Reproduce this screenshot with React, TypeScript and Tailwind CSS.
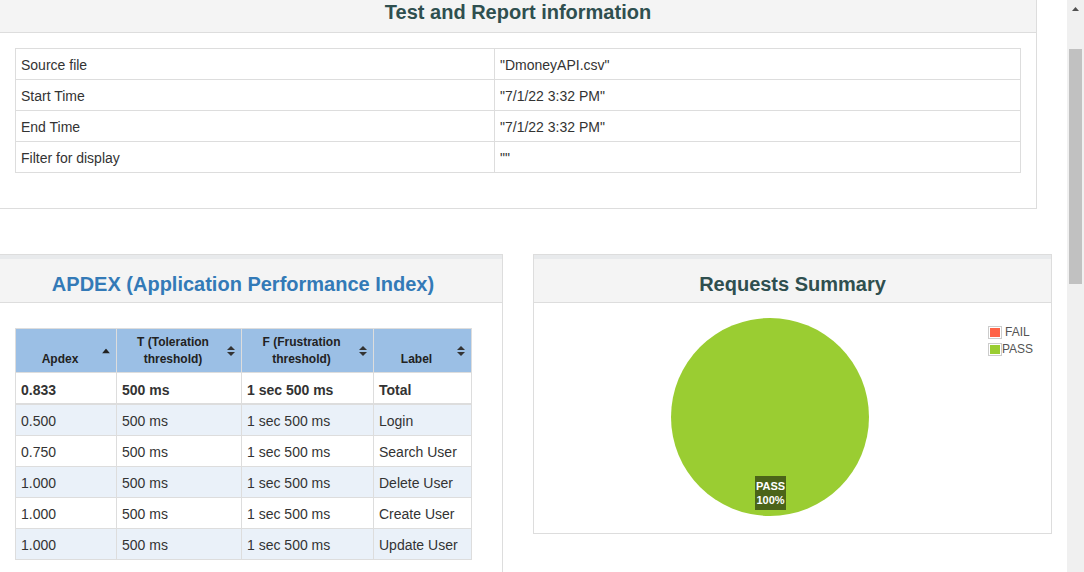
import React from "react";

const font = { fontFamily: '"Liberation Sans", Arial, sans-serif' };

function SortBoth() {
  return (
    <svg width="8" height="10" viewBox="0 0 8 10" className="block">
      <path d="M0 4 L4 0 L8 4 Z" fill="#333" />
      <path d="M0 6 L4 10 L8 6 Z" fill="#333" />
    </svg>
  );
}

function SortUp() {
  return (
    <svg width="8" height="5" viewBox="0 0 8 5" className="block">
      <path d="M0 5 L4 0 L8 5 Z" fill="#222" />
    </svg>
  );
}

const infoRows: [string, string][] = [
  ["Source file", '"DmoneyAPI.csv"'],
  ["Start Time", '"7/1/22 3:32 PM"'],
  ["End Time", '"7/1/22 3:32 PM"'],
  ["Filter for display", '""'],
];

const apdexRows: [string, string, string, string][] = [
  ["0.500", "500 ms", "1 sec 500 ms", "Login"],
  ["0.750", "500 ms", "1 sec 500 ms", "Search User"],
  ["1.000", "500 ms", "1 sec 500 ms", "Delete User"],
  ["1.000", "500 ms", "1 sec 500 ms", "Create User"],
  ["1.000", "500 ms", "1 sec 500 ms", "Update User"],
];

const headers: { t: React.ReactNode; w: string; up: boolean }[] = [
  { t: "Apdex", w: "w-[101px]", up: true },
  {
    t: (
      <>
        T (Toleration
        <br />
        threshold)
      </>
    ),
    w: "w-[125px]",
    up: false,
  },
  {
    t: (
      <>
        F (Frustration
        <br />
        threshold)
      </>
    ),
    w: "w-[132px]",
    up: false,
  },
  { t: "Label", w: "w-[98px]", up: false },
];

export default function App() {
  return (
    <div
      className="flex h-[572px] w-[1084px] overflow-hidden bg-white text-[#333]"
      style={font}
    >
      <div className="flex-1 min-w-0 flex flex-col">
        <div className="h-px bg-[#3f7f3f]" />

        {/* Test and Report information */}
        <div className="w-[1037px] border-r border-b border-[#dddddd] bg-white">
          <div className="h-[33px] pb-[8px] bg-[#f4f4f4] border-b border-[#dddddd] flex items-center justify-center">
            <h2 className="text-[20px] font-bold text-[#2f4f4f] leading-none">
              Test and Report information
            </h2>
          </div>
          <div className="pt-[15px] pb-[35px] pl-[15px] pr-[15px]">
            <table className="w-[1006px] border-collapse text-[14px]">
              <tbody>
                {infoRows.map(([k, v]) => (
                  <tr key={k}>
                    <td className="w-[479px] border border-[#dddddd] pl-[5px] pt-[6px] pb-[4px] leading-[20px]">
                      {k}
                    </td>
                    <td className="border border-[#dddddd] pl-[5px] pt-[6px] pb-[4px] leading-[20px]">
                      {v}
                    </td>
                  </tr>
                ))}
              </tbody>
            </table>
          </div>
        </div>

        <div className="mt-[45px] flex items-start">
          {/* APDEX */}
          <div className="w-[503px] h-[400px] border-t border-r border-[#dddddd]">
            <div className="h-[4px] bg-[#e8eaec]" />
            <div className="h-[44px] pt-[6px] pr-[16px] bg-[#f4f4f4] border-b border-[#dddddd] flex items-center justify-center">
              <h2 className="text-[20px] font-bold text-[#337ab7] leading-none">
                APDEX (Application Performance Index)
              </h2>
            </div>
            <div className="pt-[25px] pl-[15px]">
              <table className="w-[457px] border-collapse text-[14px]">
                <thead>
                  <tr className="bg-[#9bbfe5] text-[12px] font-bold text-[#222]">
                    {headers.map((h, i) => (
                      <th
                        key={i}
                        className={`${h.w} relative border border-[#dddddd] pt-[5px] pb-[4px] pl-[6px] pr-[18px] leading-[17px] align-bottom text-center font-bold`}
                      >
                        {h.t}
                        <span className="absolute right-[6px] top-1/2 -translate-y-1/2">
                          {h.up ? <SortUp /> : <SortBoth />}
                        </span>
                      </th>
                    ))}
                  </tr>
                  <tr className="bg-white font-bold">
                    {["0.833", "500 ms", "1 sec 500 ms", "Total"].map((c) => (
                      <td
                        key={c}
                        className="border border-b-2 border-[#dddddd] pl-[5px] pt-[7px] pb-[3px] leading-[20px]"
                      >
                        {c}
                      </td>
                    ))}
                  </tr>
                </thead>
                <tbody>
                  {apdexRows.map((r, i) => (
                    <tr
                      key={i}
                      className={i % 2 === 0 ? "bg-[#eaf1f9]" : "bg-white"}
                    >
                      {r.map((c, j) => (
                        <td
                          key={j}
                          className="border border-[#dddddd] pl-[5px] pt-[6px] pb-[4px] leading-[20px]"
                        >
                          {c}
                        </td>
                      ))}
                    </tr>
                  ))}
                </tbody>
              </table>
            </div>
          </div>

          {/* Requests Summary */}
          <div className="ml-[30px] w-[519px] border border-[#dddddd]">
            <div className="h-[4px] bg-[#e8eaec]" />
            <div className="h-[44px] pt-[6px] bg-[#f4f4f4] border-b border-[#dddddd] flex items-center justify-center">
              <h2 className="text-[20px] font-bold text-[#2f4f4f] leading-none">
                Requests Summary
              </h2>
            </div>
            <div className="relative h-[230px]">
              <svg
                width="200"
                height="200"
                viewBox="0 0 200 200"
                className="absolute left-[136px] top-[14px]"
              >
                <circle cx="100" cy="100" r="99" fill="#9acd32" />
              </svg>
              <div className="absolute left-[221px] top-[173px] w-[31px] h-[34px] bg-[#4b6419] text-white text-[11px] font-bold leading-[14px] flex flex-col items-center justify-center">
                <span>PASS</span>
                <span>100%</span>
              </div>
              <div className="absolute left-[454px] top-[21px] text-[12px] text-[#545454] leading-[17px]">
                <div className="flex items-center">
                  <span className="border border-[#cccccc] p-px">
                    <span className="block w-[10px] h-[9px] bg-[#ff6347]" />
                  </span>
                  <span className="ml-[3px]">FAIL</span>
                </div>
                <div className="flex items-center">
                  <span className="border border-[#cccccc] p-px">
                    <span className="block w-[10px] h-[9px] bg-[#9acd32]" />
                  </span>
                  <span>PASS</span>
                </div>
              </div>
            </div>
          </div>
        </div>
      </div>

      {/* scrollbar */}
      <div className="w-[17px] bg-[#f0f0f0] flex flex-col items-center">
        <div className="h-[17px] flex items-center justify-center">
          <svg width="7" height="4" viewBox="0 0 7 4">
            <path d="M0 4 L3.5 0 L7 4 Z" fill="#505050" />
          </svg>
        </div>
        <div className="mt-[32px] w-[13px] h-[235px] bg-[#c1c1c1]" />
      </div>
    </div>
  );
}
